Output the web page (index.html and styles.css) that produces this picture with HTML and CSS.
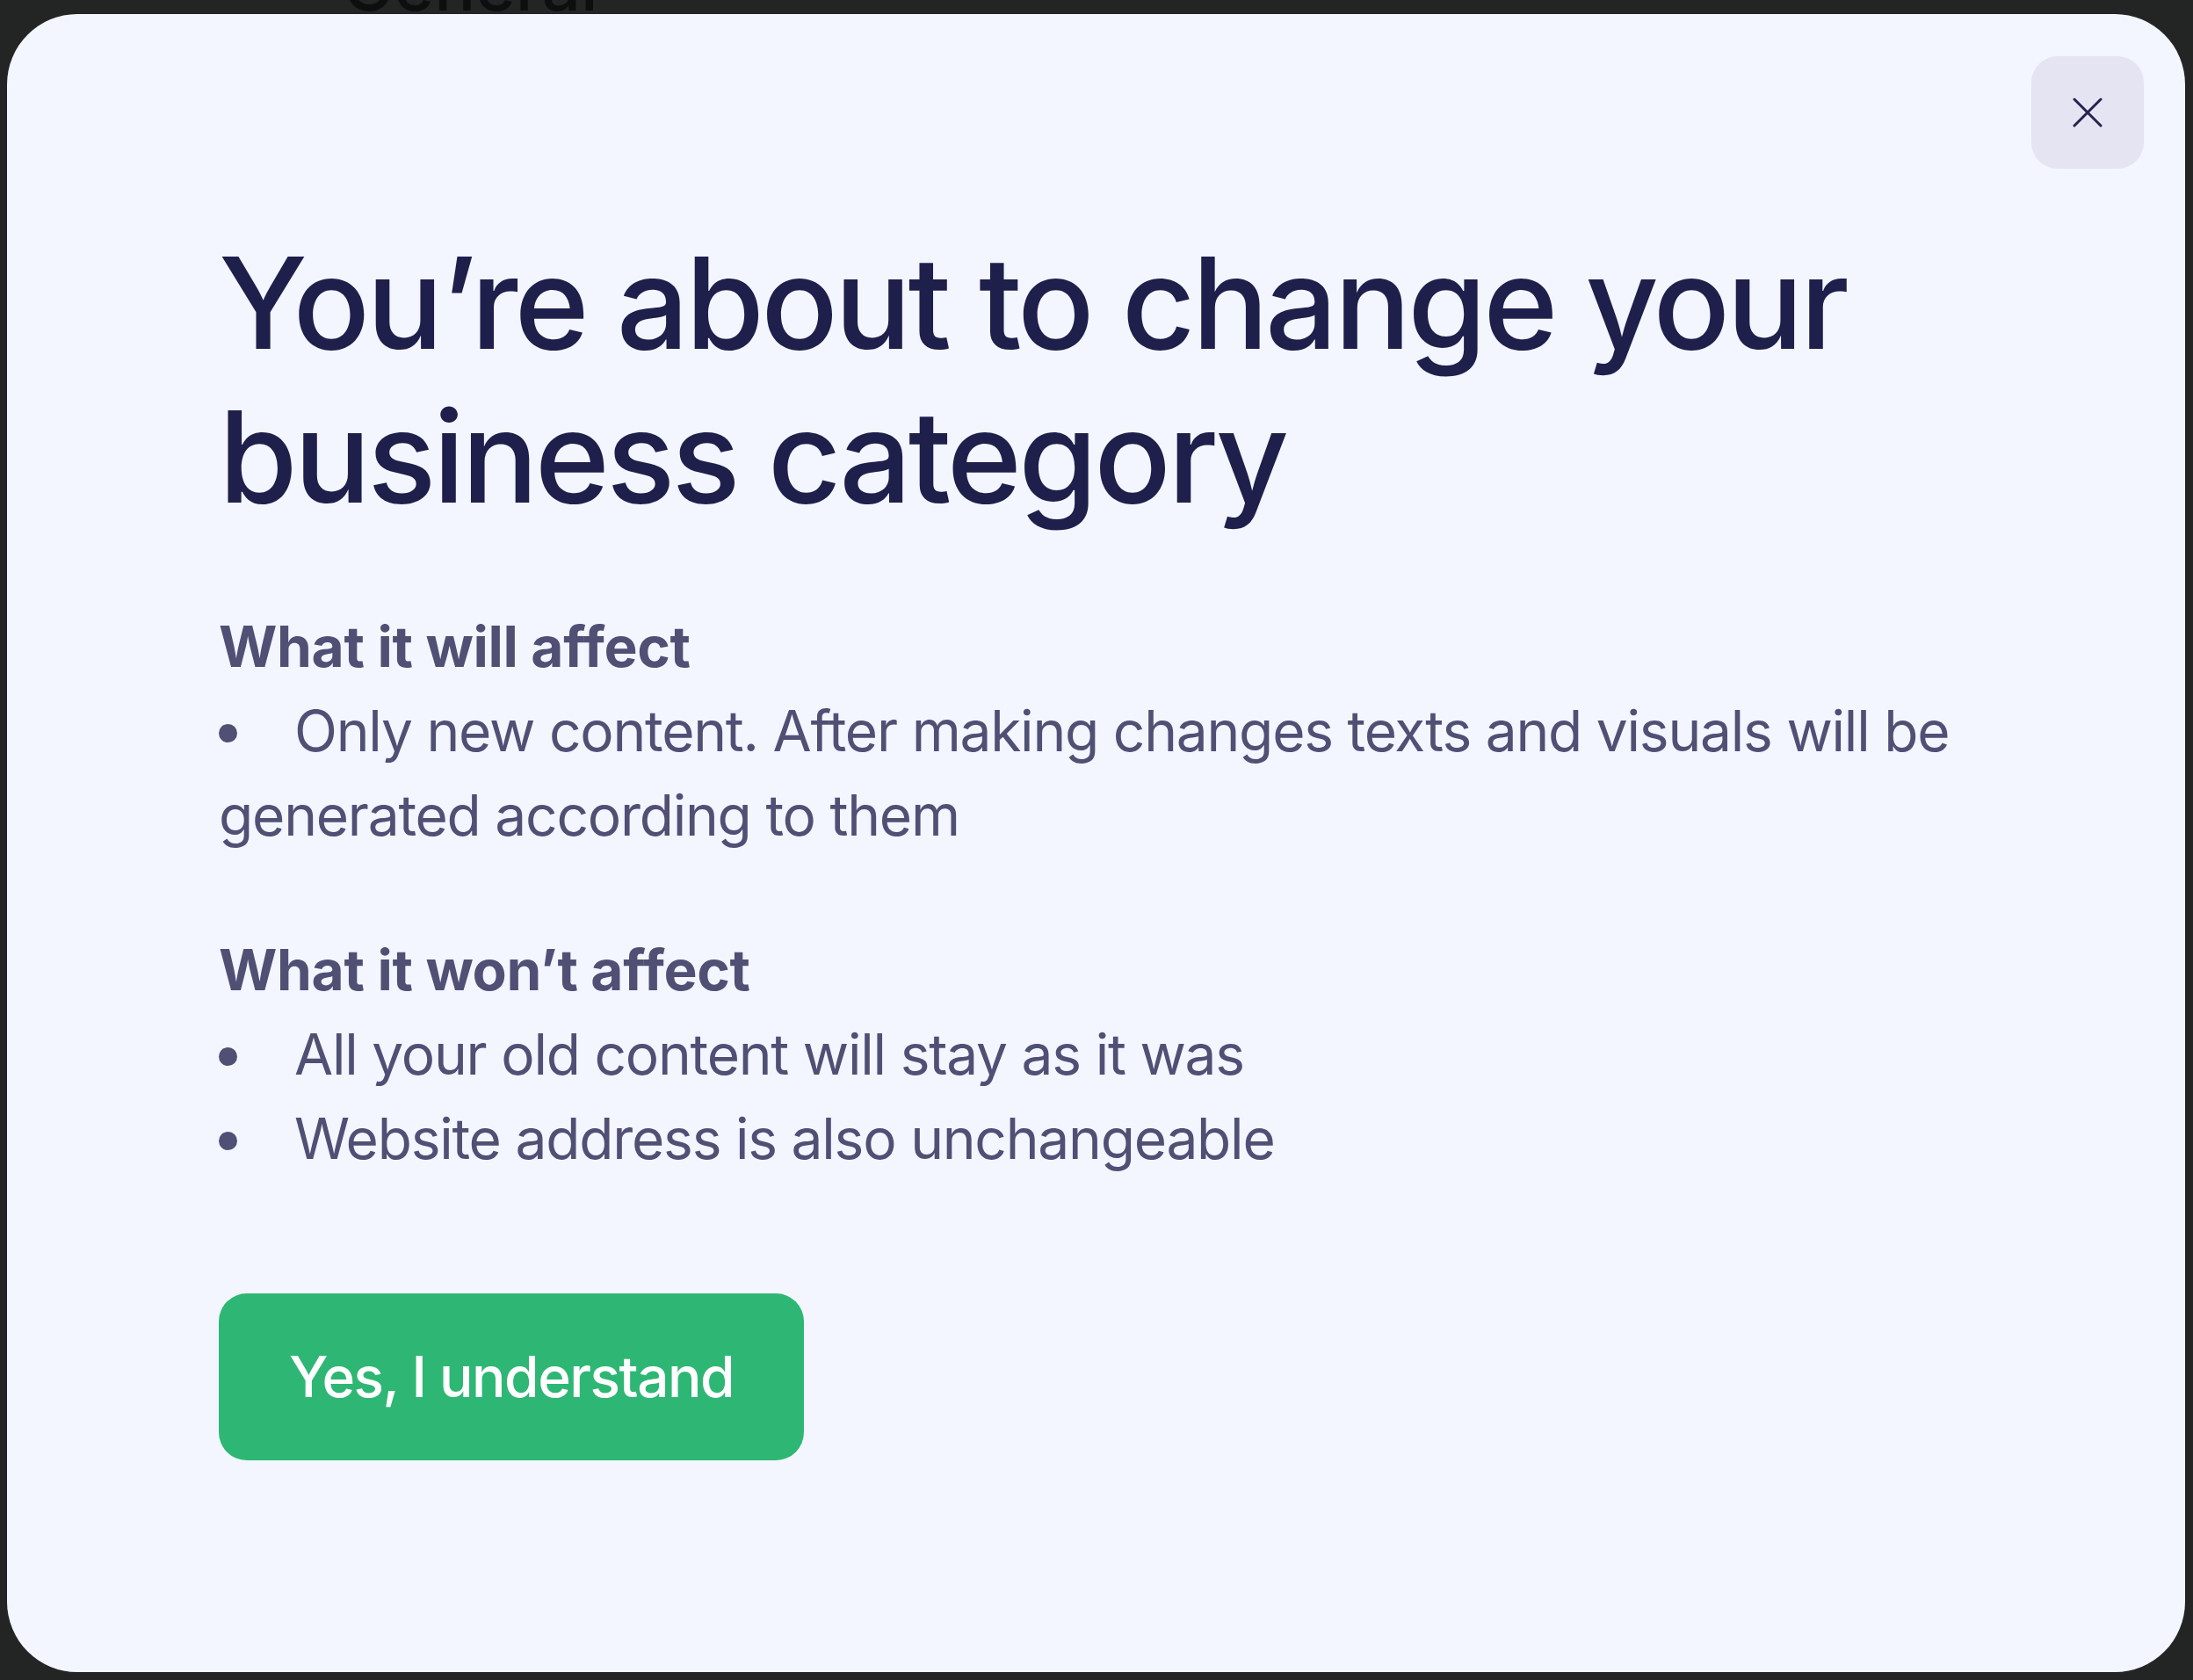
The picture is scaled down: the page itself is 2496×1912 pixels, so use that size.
FILE: index.html
```html
<!DOCTYPE html>
<html lang="en">
<head>
<meta charset="utf-8">
<title>Change business category</title>
<link rel="stylesheet" href="styles.css">
</head>
<body>
<div class="backdrop-title">General</div>
<div class="modal" role="dialog" aria-labelledby="modal-title">
  <button class="close-btn" aria-label="Close">
    <svg width="34" height="34" viewBox="0 0 34 34" fill="none" stroke="#23224f" stroke-width="3" stroke-linecap="round">
      <path d="M2 2 L32 32 M32 2 L2 32"/>
    </svg>
  </button>
  <h1 class="modal-title" id="modal-title">You’re about to change your business category</h1>
  <div class="sections">
    <section class="info">
      <h2 class="info-title">What it will affect</h2>
      <ul class="info-list">
        <li>Only new content. After making changes texts and visuals will be generated according to them</li>
      </ul>
    </section>
    <section class="info">
      <h2 class="info-title">What it won’t affect</h2>
      <ul class="info-list">
        <li>All your old content will stay as it was</li>
        <li>Website address is also unchangeable</li>
      </ul>
    </section>
  </div>
  <button class="confirm-btn">Yes, I understand</button>
</div>
</body>
</html>
```
FILE: styles.css
```css
html, body {
  margin: 0;
  height: 100%;
}
body {
  background: #232524;
  padding: 16px 9px 9px 8px;
  box-sizing: border-box;
  position: relative;
  overflow: hidden;
  font-family: Inter, "Noto Sans", sans-serif;
}
.backdrop-title {
  position: absolute;
  top: -55px;
  left: 390px;
  font-size: 78px;
  line-height: 1;
  font-weight: 500;
  color: #0d0e0f;
}
.modal {
  position: relative;
  background: #f3f6fe;
  border-radius: 80px;
  height: 100%;
  box-sizing: border-box;
  padding: 241px 241px 241px 241px;
  display: flex;
  flex-direction: column;
  align-items: flex-start;
}
.close-btn {
  position: absolute;
  top: 48px;
  right: 47px;
  width: 128px;
  height: 128px;
  border: none;
  border-radius: 30px;
  background: #e4e4f2;
  display: flex;
  align-items: center;
  justify-content: center;
  padding: 0;
  cursor: pointer;
}
.modal-title {
  margin: 0;
  font-size: 145px;
  line-height: 175px;
  font-weight: 500;
  color: #1e1f4b;
  letter-spacing: -0.026em;
}
.sections {
  margin-top: 81px;
  display: flex;
  flex-direction: column;
  gap: 80px;
  color: #505075;
  font-size: 64px;
  line-height: 96px;
  letter-spacing: -0.019em;
}
.info-title {
  margin: 0;
  font-size: 64px;
  line-height: 96px;
  font-weight: 700;
  letter-spacing: -0.005em;
}
.info-list {
  list-style: none;
  margin: 0;
  padding: 0;
}
.info-list li::before {
  content: "";
  display: inline-block;
  width: 21px;
  height: 21px;
  border-radius: 50%;
  background: #505075;
  vertical-align: 10px;
  margin-right: 65px;
}
.confirm-btn {
  margin-top: 128px;
  height: 190px;
  padding: 0 80px;
  border: none;
  border-radius: 32px;
  background: #2eb774;
  color: #ffffff;
  font-family: Inter, "Noto Sans", sans-serif;
  font-size: 64px;
  font-weight: 500;
  line-height: 96px;
  letter-spacing: -0.023em;
  cursor: pointer;
}
```
